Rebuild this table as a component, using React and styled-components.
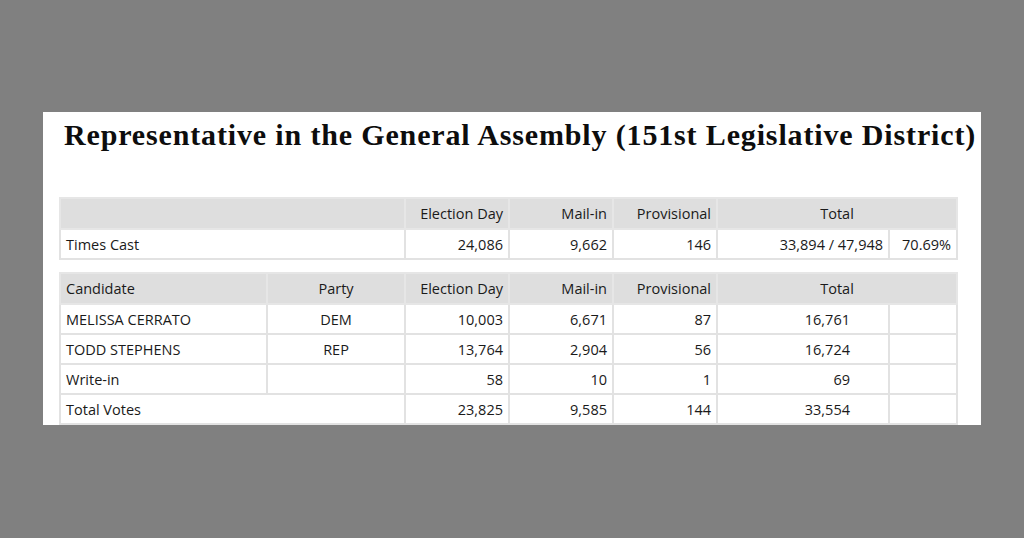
import React from 'react';
import styled, { createGlobalStyle } from 'styled-components';

const GlobalStyle = createGlobalStyle`
  html, body {
    margin: 0;
    padding: 0;
    background: #808080;
  }
  body {
    width: 1024px;
    height: 538px;
    overflow: hidden;
  }
`;

const Page = styled.div`
  padding: 112px 0 0 43px;
`;

const Panel = styled.div`
  width: 938px;
  height: 313px;
  background: #fff;
  overflow: hidden;
  padding: 0 0 0 16px;
  box-sizing: border-box;
`;

const Title = styled.h1`
  margin: 0;
  padding: 6px 0 0 5px;
  height: 85px;
  box-sizing: border-box;
  font-family: 'Liberation Serif', 'DejaVu Serif', serif;
  font-weight: bold;
  font-size: 30px;
  line-height: 34px;
  letter-spacing: 0.85px;
  color: #0d0d0d;
  white-space: nowrap;
`;

const Table = styled.table`
  width: 897px;
  table-layout: fixed;
  border-collapse: collapse;
  margin-bottom: ${props => props.$gap || 0}px;
  font-family: 'Open Sans', 'Noto Sans', sans-serif;
  font-size: 14.5px;
  color: #1a1a1a;
`;

const HeadCell = styled.th`
  height: 29px;
  padding: 0 5px;
  background: #dedede;
  border: 2px solid #e6e6e6;
  font-weight: normal;
  text-align: ${props => props.$align || 'right'};
  white-space: nowrap;
`;

const Cell = styled.td`
  height: 28px;
  padding: 0 ${props => props.$padRight || 5}px 0 5px;
  border: 2px solid #e2e2e2;
  text-align: ${props => props.$align || 'right'};
  white-space: nowrap;
`;

const candidates = [
  { name: 'MELISSA CERRATO', party: 'DEM', day: '10,003', mail: '6,671', prov: '87', total: '16,761' },
  { name: 'TODD STEPHENS', party: 'REP', day: '13,764', mail: '2,904', prov: '56', total: '16,724' },
  { name: 'Write-in', party: '', day: '58', mail: '10', prov: '1', total: '69' },
];

const App = () => (
  <Page>
    <GlobalStyle />
    <Panel>
      <Title>Representative in the General Assembly (151st Legislative District)</Title>
      <Table $gap={12}>
        <colgroup>
          <col style={{ width: 345 }} />
          <col style={{ width: 104 }} />
          <col style={{ width: 104 }} />
          <col style={{ width: 104 }} />
          <col style={{ width: 172 }} />
          <col style={{ width: 68 }} />
        </colgroup>
        <thead>
          <tr>
            <HeadCell />
            <HeadCell>Election Day</HeadCell>
            <HeadCell>Mail-in</HeadCell>
            <HeadCell>Provisional</HeadCell>
            <HeadCell colSpan={2} $align="center">Total</HeadCell>
          </tr>
        </thead>
        <tbody>
          <tr>
            <Cell $align="left">Times Cast</Cell>
            <Cell>24,086</Cell>
            <Cell>9,662</Cell>
            <Cell>146</Cell>
            <Cell>33,894 / 47,948</Cell>
            <Cell>70.69%</Cell>
          </tr>
        </tbody>
      </Table>
      <Table>
        <colgroup>
          <col style={{ width: 207 }} />
          <col style={{ width: 138 }} />
          <col style={{ width: 104 }} />
          <col style={{ width: 104 }} />
          <col style={{ width: 104 }} />
          <col style={{ width: 172 }} />
          <col style={{ width: 68 }} />
        </colgroup>
        <thead>
          <tr>
            <HeadCell $align="left">Candidate</HeadCell>
            <HeadCell $align="center">Party</HeadCell>
            <HeadCell>Election Day</HeadCell>
            <HeadCell>Mail-in</HeadCell>
            <HeadCell>Provisional</HeadCell>
            <HeadCell colSpan={2} $align="center">Total</HeadCell>
          </tr>
        </thead>
        <tbody>
          {candidates.map(c => (
            <tr key={c.name}>
              <Cell $align="left">{c.name}</Cell>
              <Cell $align="center">{c.party}</Cell>
              <Cell>{c.day}</Cell>
              <Cell>{c.mail}</Cell>
              <Cell>{c.prov}</Cell>
              <Cell $padRight={38}>{c.total}</Cell>
              <Cell />
            </tr>
          ))}
          <tr>
            <Cell $align="left" colSpan={2}>Total Votes</Cell>
            <Cell>23,825</Cell>
            <Cell>9,585</Cell>
            <Cell>144</Cell>
            <Cell $padRight={38}>33,554</Cell>
            <Cell />
          </tr>
        </tbody>
      </Table>
    </Panel>
  </Page>
);

export default App;
